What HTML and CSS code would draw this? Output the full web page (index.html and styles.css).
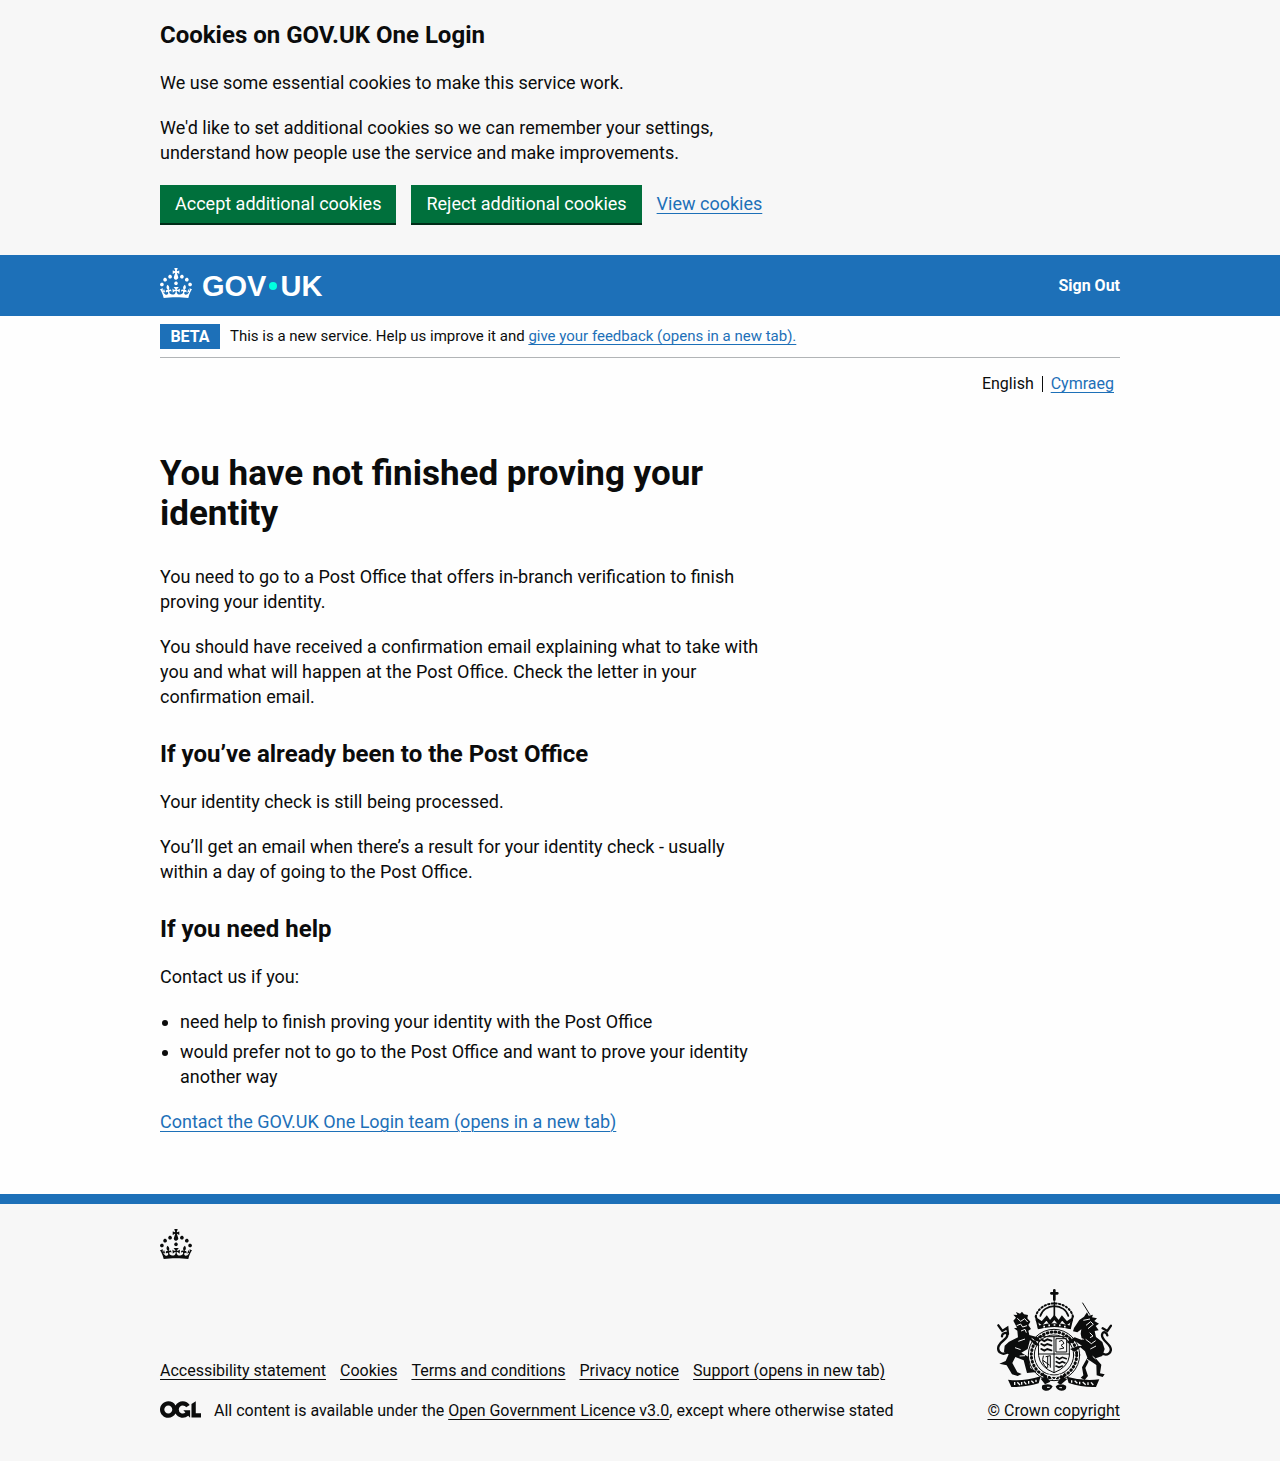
FILE: index.html
```html
<!DOCTYPE html>
<html lang="en">
<head>
<meta charset="utf-8">
<title>You have not finished proving your identity</title>
<meta name="viewport" content="width=device-width, initial-scale=1">
<link rel="stylesheet" href="styles.css">
</head>
<body>
<svg class="sprite" aria-hidden="true">
  <symbol id="crown" viewBox="0 0 32 30">
    <path d="M22.6 10.4c-1 .4-2-.1-2.4-1-.4-.9.1-2 1-2.4.9-.4 2 .1 2.4 1s-.1 2-1 2.4m-5.9 6.7c-.9.4-2-.1-2.4-1-.4-.9.1-2 1-2.4.9-.4 2 .1 2.4 1s-.1 2-1 2.4m10.8-3.7c-1 .4-2-.1-2.4-1-.4-.9.1-2 1-2.4.9-.4 2 .1 2.4 1s0 2-1 2.4m3.3 4.8c-1 .4-2-.1-2.4-1-.4-.9.1-2 1-2.4.9-.4 2 .1 2.4 1s-.1 2-1 2.4M17 4.7l2.3 1.2V2.5l-2.3.7-.2-.2.9-3h-3.4l.9 3-.2.2c-.1.1-2.3-.7-2.3-.7v3.4L15 4.7c.1.1.1.2.2.2l-1.3 4c-.1.2-.1.4-.1.6 0 1.1.8 2 1.9 2.2h.7c1-.2 1.9-1.1 1.9-2.1 0-.2 0-.4-.1-.6l-1.3-4c-.1-.2 0-.2.1-.3m-7.6 5.7c.9.4 2-.1 2.4-1 .4-.9-.1-2-1-2.4-.9-.4-2 .1-2.4 1s0 2 1 2.4m-5 3c.9.4 2-.1 2.4-1 .4-.9-.1-2-1-2.4-.9-.4-2 .1-2.4 1s.1 2 1 2.4m-3.2 4.8c.9.4 2-.1 2.4-1 .4-.9-.1-2-1-2.4-.9-.4-2 .1-2.4 1s0 2 1 2.4m14.8 11c4.4 0 8.6.3 12.3.8 1.1-4.5 2.4-7 3.7-8.8l-2.5-.9c.2 1.3.3 1.9 0 2.7-.4-.4-.8-1.1-1.1-2.3l-1.2 4c.7-.5 1.3-.8 2-.9-1.1 2.5-2.6 3.1-3.5 3-1.1-.2-1.7-1.2-1.5-2.1.3-1.2 1.5-1.5 2.1-.1 1.1-2.3-.8-3-2-2.3 1.9-1.9 2.1-3.5.6-5.6-2.1 1.6-2.1 3.2-1.2 5.5-1.2-1.4-3.2-.6-2.5 1.6.9-1.4 2.1-.5 1.9.8-.2 1.1-1.7 2.1-3.5 1.9-2.7-.2-2.9-2.1-2.9-3.6.7-.1 1.9.5 2.9 1.9l.4-4.3c-1.1 1.1-2.1 1.4-3.2 1.4.4-1.2 2.1-3 2.1-3h-5.4s1.7 1.9 2.1 3c-1.1 0-2.1-.2-3.2-1.4l.4 4.3c1-1.4 2.2-2 2.9-1.9-.1 1.5-.2 3.4-2.9 3.6-1.9.2-3.4-.8-3.5-1.9-.2-1.3 1-2.2 1.9-.8.7-2.3-1.2-3-2.5-1.6.9-2.2.9-3.9-1.2-5.5-1.5 2-1.3 3.7.6 5.6-1.2-.7-3.1 0-2 2.3.6-1.4 1.8-1.1 2.1.1.2.9-.3 1.9-1.5 2.1-.9.2-2.4-.5-3.5-3 .6 0 1.2.3 2 .9l-1.2-4c-.3 1.1-.7 1.9-1.1 2.3-.3-.8-.2-1.4 0-2.7l-2.9.9C1.3 23 2.6 25.5 3.7 30c3.7-.5 7.9-.8 12.3-.8"/>
  </symbol>
</svg>

<section class="cookie-banner" aria-label="Cookies on GOV.UK One Login">
  <div class="container">
    <div class="two-thirds">
      <h2 class="heading-m">Cookies on GOV.UK One Login</h2>
      <p>We use some essential cookies to make this service work.</p>
      <p>We'd like to set additional cookies so we can remember your settings, understand how people use the service and make improvements.</p>
    </div>
    <div class="button-group">
      <button class="button" type="button">Accept additional cookies</button>
      <button class="button" type="button">Reject additional cookies</button>
      <a class="link" href="#cookies">View cookies</a>
    </div>
  </div>
</section>

<header class="header">
  <div class="container header-row">
    <a class="logo" href="#home" aria-label="GOV.UK">
      <svg class="crown" aria-hidden="true"><use href="#crown"/></svg>
      <span class="wordmark"><span>GOV</span><span class="dot"></span><span>UK</span></span>
    </a>
    <a class="sign-out" href="#sign-out">Sign Out</a>
  </div>
</header>

<div class="container">
  <div class="phase-banner">
    <strong class="tag">BETA</strong>
    <span>This is a new service. Help us improve it and <a class="link" href="#feedback">give your feedback (opens in a new tab).</a></span>
  </div>
  <nav class="languages" aria-label="Language">
    <span class="language">English</span>
    <a class="language" href="#cy">Cymraeg</a>
  </nav>
  <main class="main two-thirds">
    <h1>You have not finished proving your identity</h1>
    <p>You need to go to a Post Office that offers in-branch verification to finish proving your identity.</p>
    <p>You should have received a confirmation email explaining what to take with you and what will happen at the Post Office. Check the letter in your confirmation email.</p>
    <h2 class="heading-m">If you’ve already been to the Post Office</h2>
    <p>Your identity check is still being processed.</p>
    <p>You’ll get an email when there’s a result for your identity check - usually within a day of going to the Post Office.</p>
    <h2 class="heading-m">If you need help</h2>
    <p>Contact us if you:</p>
    <ul class="list">
      <li>need help to finish proving your identity with the Post Office</li>
      <li>would prefer not to go to the Post Office and want to prove your identity another way</li>
    </ul>
    <p><a class="link" href="#contact">Contact the GOV.UK One Login team (opens in a new tab)</a></p>
  </main>
</div>

<footer class="footer">
  <div class="container">
    <svg class="crown" aria-hidden="true"><use href="#crown"/></svg>
    <div class="footer-meta">
      <div class="footer-text">
        <ul class="footer-links">
          <li><a href="#accessibility">Accessibility statement</a></li>
          <li><a href="#cookies">Cookies</a></li>
          <li><a href="#terms">Terms and conditions</a></li>
          <li><a href="#privacy">Privacy notice</a></li>
          <li><a href="#support">Support (opens in new tab)</a></li>
        </ul>
        <div class="licence">
          <svg class="ogl" viewBox="0 0 483 196" aria-hidden="true">
            <path d="M421.500 142.800V.1l-50.700 32.300v161.100h112.400v-50.700zm-122.300-9.600A47.120 47.120 0 0 1 221 97.800c0-26 21.100-47.100 47.100-47.100 16.700 0 31.400 8.700 39.700 21.800l42.700-27.200A97.630 97.630 0 0 0 268.100 0c-36.500 0-68.300 20.100-85.100 49.700A98 98 0 0 0 97.800 0C43.900 0 0 43.900 0 97.800s43.900 97.800 97.800 97.800c36.500 0 68.300-20.100 85.100-49.700a97.760 97.760 0 0 0 149.600 25.400l19.400 22.200h3v-87.800h-80l24.300 27.500zM97.800 145c-26 0-47.100-21.100-47.100-47.100s21.100-47.100 47.100-47.100 47.100 21.100 47.100 47.100S123.800 145 97.800 145"/>
          </svg>
          <span>All content is available under the <a href="#ogl">Open Government Licence v3.0</a>, except where otherwise stated</span>
        </div>
      </div>
      <a class="copyright" href="#copyright">
        <svg class="arms" viewBox="48 27 348 306" aria-hidden="true">
          <g fill="none" stroke="currentColor" stroke-width="4" stroke-linecap="round">
            <!-- royal crown -->
            <path d="M167 110A57 49 0 0 1 279 110" stroke-width="6" stroke-dasharray="4 7"/>
            <path d="M181 108A43 38 0 0 1 265 108M223 66v44" stroke-width="5"/>
            <path d="M223 31v28M214 40h18" stroke-width="8"/>
            <path d="M168 110l8 34q47-12 94 0l8-34" stroke-width="6"/>
            <path d="M172 120l14 10 14-16 10 14 13-16 13 16 10-14 14 16 14-10" stroke-width="10"/>
            <path d="M178 141q45-12 90 0" stroke-width="10"/>
            <!-- garter and shield -->
            <ellipse cx="222" cy="225" rx="77" ry="77" stroke-width="3"/>
            <ellipse cx="222" cy="225" rx="68" ry="69" stroke-width="9" stroke-dasharray="2 10"/>
            <ellipse cx="222" cy="225" rx="59" ry="60" stroke-width="3"/>
            <path d="M176 170h92v58q-4 34-46 50-42-16-46-50zM222 170v108M176 222h92" stroke-width="3"/>
            <path d="M184 178l9 5 9-5 12 4M184 192l9 5 9-5 12 4M184 207l9 5 9-5 12 4" stroke-width="6"/>
            <path d="M229 176h31v40h-31zM238 184l8-3 6 9-9 6 9 8-13 3" stroke-width="3"/>
            <path d="M190 228q-8 22 11 36M198 230l13-3v35M190 242l18 13M203 230v32" stroke-width="3"/>
            <path d="M229 232l9 5 9-5 12 4M229 245l9 5 9-5 8 4M228 258l9 4 10-4" stroke-width="5"/>
            <!-- lion tail, unicorn tail and horn -->
            <path d="M88 213c-20 18-38 2-32-15 6-17 28-20 26-34-3-11-17-2-16 5M55 136l12 17 15-10 2 19" stroke-width="7"/>
            <path d="M360 216c22 18 38 0 30-16-8-14-25-21-24-35 2-15 15-7 16 1M393 137l-11 16-14-8" stroke-width="7"/>
            <path d="M308 69l21 34" stroke-width="3"/>
          </g>
          <g fill="currentColor">
            <!-- lion -->
            <path d="M100 122l8-9-8-9 12 1-4-9 12 5 6-6 6 8 12 2-2 10 9 10-6 10 8 12-8 5 3 13 25 7 10 12-18-2 14 15-13-1-16-16-7 27-19 11 22 13 5 33 20 12-30 3-10-38-25-10-9 18 15 28 13 5-12 6-17-5-16-27-22-5 19-8 9-20-14-8 2-18 13-12 27-13-2-20-10-7 9-2z"/>
            <!-- unicorn -->
            <path d="M298 120l14-10 9-13 5 10 13-3-3 8 15 3-8 8 14 8-10 7 9 13-12 2 4 18 19 15 7 21-7 21-20 7 17 19-4 26 14 3-6 8-18-5-1-31-21-14-12 23 8 24-10 12-12-7 8-7-4-24 16-29-7-19-14-12-17 13-14-8 22-8 14-2-21-14-16 9-10-6 25-14 22 8-4-19 2-13-12 9-13-3 3-10z"/>
            <!-- motto ribbon and supporters' ground -->
            <path d="M84 299q45 6 98-10l-6 21q-38 12-82 11zM260 290q48 14 98 8l-10 23q-40 2-82-12z"/>
            <path d="M187 316q22-8 31 3-7 15-22 13-14-3-9-16M227 319q12-11 31-2 4 15-14 15-14-1-17-13M188 275l23 30-16 8-13-17 8-3zM256 275l-24 33 10 6 20-17-9-3z"/>
          </g>
          <g class="arms-detail" fill="none" stroke-width="3">
            <path d="M112 115l10 9 12-8 9 10M110 137l12-5 6 9 13-4M123 153l12-5 4 10M115 184l20-7M105 203l17 6M119 228l16-1M101 246l14 4M155 175l8 6"/>
            <path d="M310 121l20-4M318 136l14-11 8 8-16 13M329 158l10 10-9 5M317 178l17 13 13-9M331 207l17-9M338 229l9 8M322 237l5 8M297 174l14 4"/>
            <path d="M104 306v9M112 307l8 8M125 306v8M132 305l7 8M146 303v8M154 302l7 7M168 299v7M275 301v7M284 302l8 8M299 305v8M308 306l9 8M324 307v8M333 307l7 8" stroke-width="4"/>
            <path d="M205 281l17 19 18-19M213 289h18M201 322h8M238 323h8"/>
            <path d="M190 140h5M205 136h5M221 135h5M237 136h5M252 140h5" stroke-width="5"/>
          </g>
        </svg>
        <span>© Crown copyright</span>
      </a>
    </div>
  </div>
</footer>
</body>
</html>
```
FILE: styles.css
```css
* {
  box-sizing: border-box;
}

body {
  margin: 0;
  background: #fefefe;
  color: #0b0c0c;
  font-family: Roboto, "Liberation Sans", sans-serif;
  font-size: 18px;
  line-height: 25px;
}

h1,
h2,
p {
  margin: 0;
}

h1 {
  margin-bottom: 30px;
  font-size: 35px;
  font-weight: 700;
  line-height: 40px;
}

p {
  margin-bottom: 20px;
}

a {
  text-decoration-thickness: 1px;
  text-underline-offset: 3px;
}

svg {
  fill: currentColor;
}

.sprite {
  display: none;
}

.container {
  max-width: 1020px;
  margin: 0 auto;
  padding: 0 30px;
}

.two-thirds {
  max-width: 610px;
}

.heading-m {
  margin-bottom: 20px;
  font-size: 24px;
  font-weight: 700;
  line-height: 30px;
}

.link {
  color: #1d70b8;
}

.cookie-banner {
  padding: 20px 0 30px;
  background: #f7f7f7;
}

.button-group {
  display: flex;
  flex-wrap: wrap;
  align-items: baseline;
  gap: 15px;
}

.button {
  padding: 7px 15px;
  border: 0;
  border-bottom: 2px solid #002d18;
  background: #00703c;
  color: #fff;
  font: inherit;
  line-height: 24px;
}

.header {
  background: #1d70b8;
  color: #fff;
}

.header-row {
  display: flex;
  align-items: center;
  justify-content: space-between;
  min-height: 61px;
}

.logo {
  display: flex;
  gap: 10px;
  color: inherit;
  text-decoration: none;
}

.crown {
  display: block;
  width: 32px;
  height: 30px;
}

.logo .crown {
  margin-bottom: 6px;
}

.wordmark {
  display: flex;
  align-items: center;
  gap: 3px;
  font-family: "Liberation Sans", Arial, sans-serif;
  font-size: 29px;
  font-weight: 700;
  line-height: 30px;
}

.dot {
  width: 8px;
  height: 8px;
  border-radius: 50%;
  background: #00ffe0;
}

.sign-out {
  color: inherit;
  font-size: 16px;
  font-weight: 700;
  text-decoration: none;
}

.phase-banner {
  display: flex;
  align-items: center;
  gap: 10px;
  padding: 8px 0;
  border-bottom: 1px solid #b1b4b6;
  font-size: 15px;
}

.tag {
  min-width: 60px;
  padding: 0 8px;
  background: #1d70b8;
  color: #fff;
  font-size: 16px;
  text-align: center;
}

.languages {
  display: flex;
  justify-content: flex-end;
  padding: 18px 6px 0 0;
  font-size: 16px;
  line-height: 16px;
}

.language + .language {
  margin-left: 8px;
  padding-left: 8px;
  border-left: 1px solid #0b0c0c;
  color: #1d70b8;
}

.main {
  padding: 62px 0 40px;
}

.main .heading-m {
  padding-top: 10px;
}

.list {
  margin: 0 0 20px;
  padding-left: 20px;
}

.list li + li {
  margin-top: 5px;
}

.footer {
  padding: 25px 0 40px;
  border-top: 10px solid #1d70b8;
  background: #f7f7f7;
  font-size: 16px;
  line-height: 20px;
}

.footer a {
  color: inherit;
}

.footer-meta {
  display: flex;
  align-items: flex-end;
  justify-content: space-between;
  gap: 30px;
  padding-top: 30px;
}

.footer-links {
  display: flex;
  flex-wrap: wrap;
  gap: 14px;
  margin: 0 0 20px;
  padding: 0;
  list-style: none;
}

.licence {
  display: flex;
  gap: 13px;
}

.ogl {
  flex: none;
  width: 41px;
  height: 17px;
}

.copyright {
  display: flex;
  flex-direction: column;
  align-items: center;
  gap: 10px;
}

.arms {
  width: 116px;
  height: 102px;
}

.arms-detail {
  stroke: #f7f7f7;
}
```
